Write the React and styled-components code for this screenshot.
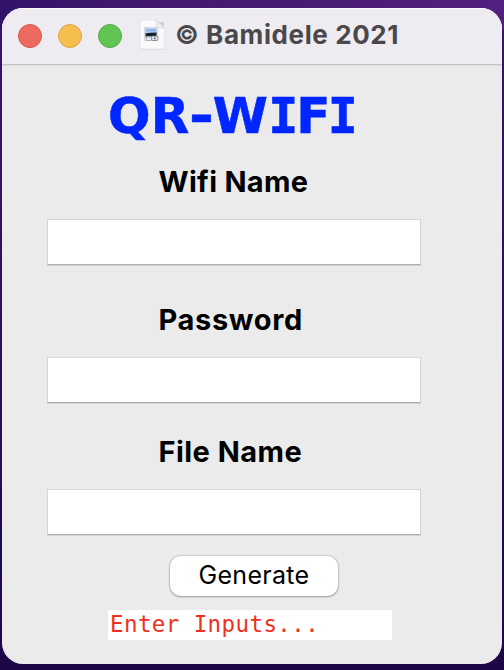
import React from "react";
import styled, { createGlobalStyle } from "styled-components";

const GlobalStyle = createGlobalStyle`
  * { box-sizing: border-box; }
  html, body { margin: 0; padding: 0; }
  body { overflow: hidden; }
`;

const Desktop = styled.div`
  width: 504px;
  height: 670px;
  padding: 8px 2px 6px;
  background:
    linear-gradient(to right, #32136a, #431970 30%, #4b1d78 75%, #522080) top / 100% 30px no-repeat,
    linear-gradient(to bottom, #37136f, #2d1058 45%, #200b4c 80%, #1d0747);
`;

const Window = styled.main`
  display: flex;
  flex-direction: column;
  height: 656px;
  border-radius: 21px;
  overflow: hidden;
  background: #ebebeb;
  font-family: Inter, "Liberation Sans", sans-serif;
`;

const TitleBar = styled.header`
  display: flex;
  align-items: center;
  flex: none;
  height: 57px;
  padding: 0 0 1px 16px;
  background: #efecf1;
  border-bottom: 1px solid #c4c2c5;
  box-shadow: inset 0 1px 0 #faf9fb, 0 1px 0 #dedede;
`;

const Lights = styled.div`
  display: flex;
  gap: 16px;
  margin-right: 17px;
`;

const Light = styled.span`
  width: 24px;
  height: 24px;
  border-radius: 50%;
  background: ${(p) => p.$fill};
  border: 1px solid ${(p) => p.$edge};
`;

const DocIcon = styled.svg`
  flex: none;
  width: 28px;
  height: 32px;
  margin-top: -2px;
`;

const WindowTitle = styled.span`
  margin: -1px 0 0 8px;
  font-size: 26px;
  font-weight: 700;
  line-height: 32px;
  letter-spacing: 0.6px;
  white-space: nowrap;
  color: #4a484b;
`;

const Form = styled.form`
  display: flex;
  flex-direction: column;
  align-items: flex-start;
  padding: 20px 0 0 45px;
`;

const Heading = styled.h1`
  margin: 0 0 0 61px;
  height: 70px;
  font-family: "DejaVu Sans", sans-serif;
  font-size: 50px;
  font-weight: 700;
  line-height: 62px;
  letter-spacing: 0.3px;
  white-space: nowrap;
  color: #0026ff;
  -webkit-text-stroke: 0.6px #0026ff;
`;

const WideDash = styled.span`
  display: inline-block;
  margin: 0 1px 0 1px;
  transform: scaleX(1.2);
`;

const SlabLetter = styled.span`
  font-family: "DejaVu Sans Mono", monospace;
  letter-spacing: -2px;
`;

const TightLetter = styled.span`
  letter-spacing: -2.7px;
`;

const Field = styled.label`
  display: flex;
  flex-direction: column;
  height: ${(p) => p.$height}px;
`;

const FieldName = styled.span`
  height: 64px;
  padding-left: 111.5px;
  font-size: 29px;
  font-weight: 700;
  line-height: 54px;
  letter-spacing: ${(p) => p.$spacing}px;
  white-space: nowrap;
  color: #000;
`;

const TextInput = styled.input`
  width: 374px;
  height: 46px;
  padding: 0 8px;
  border: 1px solid #d5d5d5;
  border-bottom-color: #b0b0b0;
  border-radius: 0;
  outline: none;
  background: #fff;
  box-shadow: 0 1px 0 #d0d0d0;
  font: 26px Inter, sans-serif;
`;

const GenerateButton = styled.button`
  width: 168px;
  height: 40px;
  margin-left: 123px;
  padding: 0 0 2px;
  border: 0;
  border-radius: 11px;
  background: #fff;
  box-shadow: 0 0 1px 0.5px rgba(0, 0, 0, 0.12), 0 1px 2px rgba(0, 0, 0, 0.26);
  font-family: Inter, sans-serif;
  font-size: 25px;
  letter-spacing: 0.3px;
  line-height: 38px;
  color: #000;
`;

const Status = styled.output`
  width: 284px;
  height: 30px;
  margin: 14px 0 0 61px;
  padding-left: 2px;
  background: #fff;
  font-family: "DejaVu Sans Mono", monospace;
  font-size: 22.5px;
  letter-spacing: 0.4px;
  line-height: 29px;
  white-space: nowrap;
  color: #f0301f;
`;

const lights = [
  { fill: "#ed6a5f", edge: "#d95549" },
  { fill: "#f5bf50", edge: "#dba440" },
  { fill: "#61c555", edge: "#4fae43" },
];

const fields = [
  { name: "Wifi Name", height: 138, spacing: 0.3 },
  { name: "Password", height: 132, spacing: 0.65 },
  { name: "File Name", height: 131, spacing: 0.45 },
];

function DocumentIcon() {
  return (
    <DocIcon viewBox="0 0 28 32" aria-hidden="true">
      <path d="M1.500 3h23.500v27.500h-23.500z" fill="#aaa8ad" opacity=".45" />
      <path d="M2 1h15l8.500 8v20a1 1 0 0 1-1 1H2a1 1 0 0 1-1-1V2a1 1 0 0 1 1-1z" fill="#fafafa" stroke="#dedce0" strokeWidth=".6" />
      <path d="M17 1v7a1 1 0 0 0 1 1h7.500z" fill="#ededee" stroke="#d2d0d4" strokeWidth=".5" />
      <rect x="5.500" y="8.500" width="13" height="13" fill="#f2f3f5" stroke="#c9cbd0" strokeWidth=".7" />
      <path d="M6.500 9.500h11v5h-11z" fill="#92b5ea" />
      <path d="M6.500 12.500h11v1.500h-11z" fill="#b4cdf2" />
      <path d="M6.500 14.300l5-.5 6-.3V18h-11z" fill="#17202d" />
      <path d="M6.500 17h8v2.500h-8z" fill="#a9afb5" />
      <rect x="7.500" y="18" width="5" height="3.500" rx="1" fill="#edf0f2" stroke="#858c92" strokeWidth=".6" />
      <rect x="12.500" y="17" width="6.500" height="4.500" rx="1.200" fill="#dfe3e6" stroke="#686f76" strokeWidth=".7" />
      <circle cx="15.800" cy="19.200" r="1" fill="#737b82" />
    </DocIcon>
  );
}

export default function App() {
  return (
    <>
      <GlobalStyle />
      <Desktop>
        <Window>
          <TitleBar>
            <Lights>
              {lights.map((l) => (
                <Light key={l.fill} $fill={l.fill} $edge={l.edge} />
              ))}
            </Lights>
            <DocumentIcon />
            <WindowTitle>© Bamidele 2021</WindowTitle>
          </TitleBar>
          <Form onSubmit={(e) => e.preventDefault()}>
            <Heading>
              QR<WideDash>-</WideDash>W<SlabLetter>I</SlabLetter>
              <TightLetter>F</TightLetter>
              <SlabLetter>I</SlabLetter>
            </Heading>
            {fields.map((f) => (
              <Field key={f.name} $height={f.height}>
                <FieldName $spacing={f.spacing}>{f.name}</FieldName>
                <TextInput type="text" />
              </Field>
            ))}
            <GenerateButton type="submit">Generate</GenerateButton>
            <Status>Enter Inputs...</Status>
          </Form>
        </Window>
      </Desktop>
    </>
  );
}
